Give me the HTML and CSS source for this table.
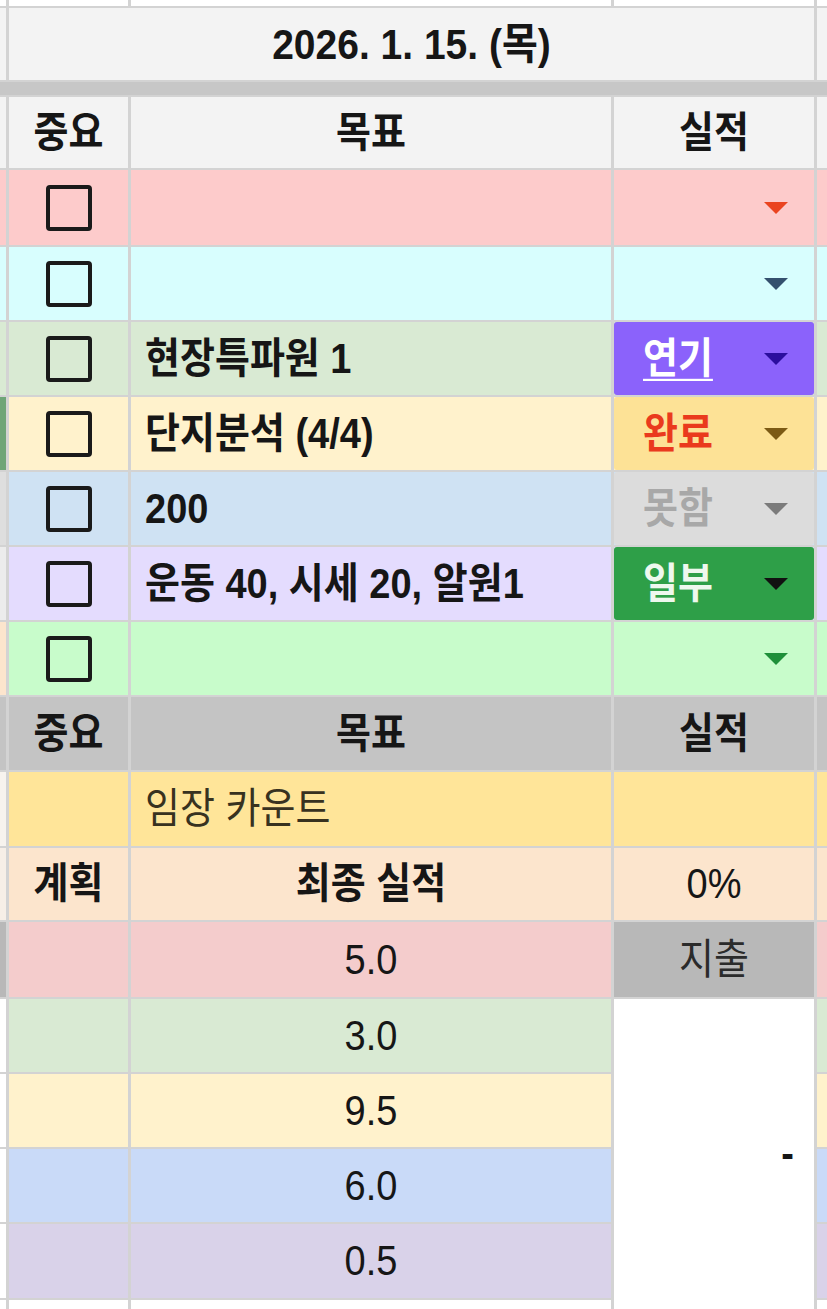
FILE: index.html
```html
<!DOCTYPE html>
<html lang="ko">
<head>
<meta charset="utf-8">
<title>Sheet</title>
<link rel="stylesheet" href="styles.css">
</head>
<body>
<div class="sheet">
  <!-- top strip -->
  <div class="c white"></div><div class="c white"></div><div class="c white"></div><div class="c white"></div><div class="c white"></div>

  <!-- date -->
  <div class="c lgray"></div>
  <div class="c lgray center b date"><span class="t">2026. 1. 15. (목)</span></div>
  <div class="c lgray"></div>

  <!-- separator -->
  <div class="sep"></div>

  <!-- header 1 -->
  <div class="c lgray"></div>
  <div class="c lgray center b"><span class="t">중요</span></div>
  <div class="c lgray center b"><span class="t">목표</span></div>
  <div class="c lgray center b"><span class="t">실적</span></div>
  <div class="c lgray"></div>

  <!-- pink -->
  <div class="c pink"></div>
  <div class="c pink center"><span class="cb"></span></div>
  <div class="c pink"></div>
  <div class="c pink st"><div class="chip empty"><i class="arr a-red"></i></div></div>
  <div class="c pink"></div>

  <!-- cyan -->
  <div class="c cyan"></div>
  <div class="c cyan center"><span class="cb"></span></div>
  <div class="c cyan"></div>
  <div class="c cyan st"><div class="chip empty"><i class="arr a-slate"></i></div></div>
  <div class="c cyan"></div>

  <!-- green -->
  <div class="c green"></div>
  <div class="c green center"><span class="cb"></span></div>
  <div class="c green left b"><span class="t">현장특파원 1</span></div>
  <div class="c green st"><div class="chip purple"><span class="t lbl u">연기</span><i class="arr a-indigo"></i></div></div>
  <div class="c green"></div>

  <!-- yellow -->
  <div class="c sl-green"></div>
  <div class="c yellow center"><span class="cb"></span></div>
  <div class="c yellow left b"><span class="t">단지분석 (4/4)</span></div>
  <div class="c yellow st"><div class="chip gold"><span class="t lbl done">완료</span><i class="arr a-brown"></i></div></div>
  <div class="c yellow"></div>

  <!-- blue -->
  <div class="c sl-gray"></div>
  <div class="c blue center"><span class="cb"></span></div>
  <div class="c blue left b"><span class="t">200</span></div>
  <div class="c blue st"><div class="chip silver"><span class="t lbl fail">못함</span><i class="arr a-gray"></i></div></div>
  <div class="c blue"></div>

  <!-- lavender -->
  <div class="c sl-light"></div>
  <div class="c lav center"><span class="cb"></span></div>
  <div class="c lav left b"><span class="t">운동 40, 시세 20, 알원1</span></div>
  <div class="c lav st"><div class="chip dgreen"><span class="t lbl part">일부</span><i class="arr a-black"></i></div></div>
  <div class="c lav"></div>

  <!-- mint -->
  <div class="c peach"></div>
  <div class="c mint center"><span class="cb"></span></div>
  <div class="c mint"></div>
  <div class="c mint st"><div class="chip empty"><i class="arr a-green"></i></div></div>
  <div class="c mint"></div>

  <!-- header 2 -->
  <div class="c mgray"></div>
  <div class="c mgray center b"><span class="t">중요</span></div>
  <div class="c mgray center b"><span class="t">목표</span></div>
  <div class="c mgray center b"><span class="t">실적</span></div>
  <div class="c mgray"></div>

  <!-- count -->
  <div class="c sl-warm"></div>
  <div class="c gold2"></div>
  <div class="c gold2 left count"><span class="t">임장 카운트</span></div>
  <div class="c gold2"></div>
  <div class="c gold2"></div>

  <!-- plan -->
  <div class="c sl-warm2"></div>
  <div class="c peach center b"><span class="t">계획</span></div>
  <div class="c peach center b"><span class="t">최종 실적</span></div>
  <div class="c peach center"><span class="t">0%</span></div>
  <div class="c peach"></div>

  <!-- 5.0 -->
  <div class="c dgray"></div>
  <div class="c rose"></div>
  <div class="c rose center"><span class="t">5.0</span></div>
  <div class="c dgray center expense"><span class="t">지출</span></div>
  <div class="c rose"></div>

  <!-- 3.0 -->
  <div class="c white"></div>
  <div class="c green"></div>
  <div class="c green center"><span class="t">3.0</span></div>
  <div class="c white merged"><span class="t">-</span></div>
  <div class="c green"></div>

  <!-- 9.5 -->
  <div class="c white"></div>
  <div class="c yellow"></div>
  <div class="c yellow center"><span class="t">9.5</span></div>
  <div class="c yellow"></div>

  <!-- 6.0 -->
  <div class="c white"></div>
  <div class="c corn"></div>
  <div class="c corn center"><span class="t">6.0</span></div>
  <div class="c corn"></div>

  <!-- 0.5 -->
  <div class="c white"></div>
  <div class="c purp"></div>
  <div class="c purp center"><span class="t">0.5</span></div>
  <div class="c purp"></div>

  <!-- bottom strip -->
  <div class="c white"></div><div class="c white"></div><div class="c white"></div><div class="c white"></div><div class="c white"></div>
</div>
</body>
</html>
```

FILE: styles.css
```css
html, body {
  margin: 0;
  padding: 0;
  background: #ffffff;
}

body {
  width: 827px;
  height: 1309px;
  overflow: hidden;
  font-family: "Liberation Sans", "Noto Sans CJK KR", sans-serif;
}

.sheet {
  display: grid;
  grid-template-columns: 6px 119px 480px 200px 10px;
  grid-template-rows: 6px 72px 13px 71px 75px 73px 73px 73px 73px 73px 73px 73px 74px 72px 75px 73px 73px 73px 74px 9px;
  column-gap: 3px;
  row-gap: 2px;
  background: #d3d3d3;
}

.c {
  display: flex;
  align-items: center;
  font-size: 38px;
  line-height: 1;
  color: #161616;
  overflow: hidden;
  white-space: nowrap;
  min-width: 0;
}

.t {
  display: inline-block;
  transform: scaleY(1.1);
}

.center { justify-content: center; }
.left { padding-left: 14px; }
.b { font-weight: 700; }

.date { grid-column: 2 / 5; font-size: 39px; }

.sep {
  grid-column: 1 / -1;
  background: #c7c7c7;
}

.merged {
  grid-row: span 5;
  justify-content: flex-end;
  padding-right: 20px;
  font-weight: 700;
}

.count { color: #38321f; }
.expense { color: #2b2b2b; }

/* colours */
.white { background: #ffffff; }
.lgray { background: #f3f3f3; }
.mgray { background: #c4c4c4; }
.dgray { background: #b8b8b8; }
.pink { background: #fdcbcb; }
.cyan { background: #d8fefe; }
.green { background: #d9ead3; }
.yellow { background: #fff2cc; }
.blue { background: #cfe2f3; }
.lav { background: #e4dcfe; }
.mint { background: #c8fccb; }
.gold2 { background: #ffe599; }
.peach { background: #fce5cd; }
.rose { background: #f4cccc; }
.corn { background: #c9daf8; }
.purp { background: #d9d2e9; }
.sl-green { background: #6fa577; }
.sl-gray { background: #dedede; }
.sl-light { background: #ececec; }
.sl-warm { background: #f7f3ee; }
.sl-warm2 { background: #f7efe7; }

/* checkbox */
.cb {
  display: block;
  width: 46px;
  height: 46px;
  box-sizing: border-box;
  border: 4px solid #1a1a1a;
  border-radius: 4px;
}

/* status dropdown */
.st { align-items: stretch; }

.chip {
  flex: 1;
  display: flex;
  align-items: center;
  justify-content: space-between;
  padding: 0 26px 0 29px;
  border-radius: 3px;
}

.chip.empty { justify-content: flex-end; }
.chip.purple { background: #8b62fb; }
.chip.gold { background: #fde296; }
.chip.silver { background: #dcdcdc; }
.chip.dgreen { background: #2e9f48; }

.lbl { font-weight: 700; }
.u {
  color: #ffffff;
  text-decoration: underline;
  text-decoration-thickness: 2px;
  text-underline-offset: 5px;
}
.done { color: #ea3a1d; }
.fail { color: #a8a8a8; }
.part { color: #eef8ee; }

.arr {
  display: block;
  width: 0;
  height: 0;
  border-left: 12px solid transparent;
  border-right: 12px solid transparent;
  border-top: 12px solid #000;
}

.a-red { border-top-color: #ea4420; }
.a-slate { border-top-color: #34506e; }
.a-indigo { border-top-color: #2b0e9e; }
.a-brown { border-top-color: #7c5a14; }
.a-gray { border-top-color: #7b7b7b; }
.a-black { border-top-color: #111111; }
.a-green { border-top-color: #1f8f3a; }
```
